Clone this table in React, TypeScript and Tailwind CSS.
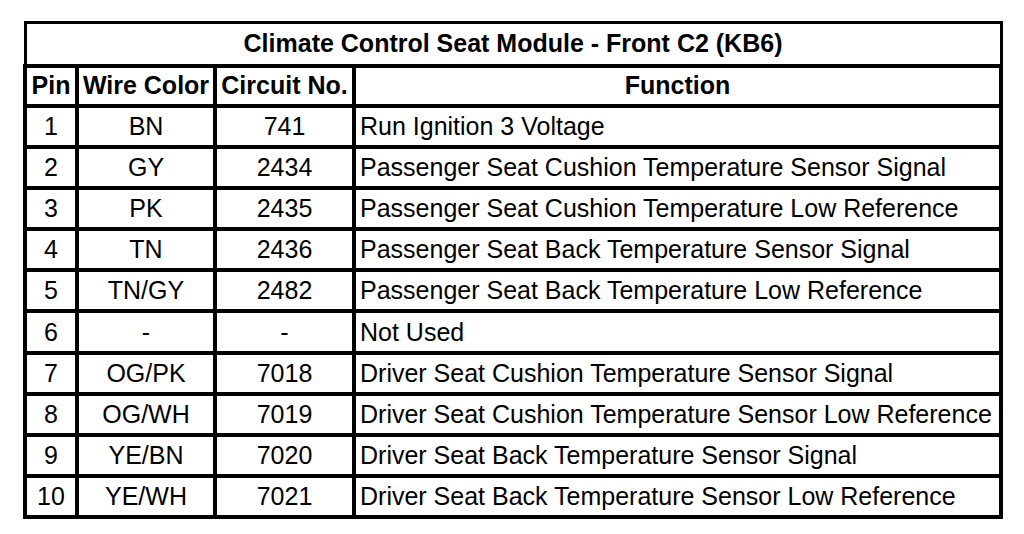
const ROWS: [string, string, string, string][] = [
  ["1", "BN", "741", "Run Ignition 3 Voltage"],
  ["2", "GY", "2434", "Passenger Seat Cushion Temperature Sensor Signal"],
  ["3", "PK", "2435", "Passenger Seat Cushion Temperature Low Reference"],
  ["4", "TN", "2436", "Passenger Seat Back Temperature Sensor Signal"],
  ["5", "TN/GY", "2482", "Passenger Seat Back Temperature Low Reference"],
  ["6", "-", "-", "Not Used"],
  ["7", "OG/PK", "7018", "Driver Seat Cushion Temperature Sensor Signal"],
  ["8", "OG/WH", "7019", "Driver Seat Cushion Temperature Sensor Low Reference"],
  ["9", "YE/BN", "7020", "Driver Seat Back Temperature Sensor Signal"],
  ["10", "YE/WH", "7021", "Driver Seat Back Temperature Sensor Low Reference"],
];

export default function App() {
  return (
    <div className="w-[1024px] h-[534px] bg-white pt-[21px] pl-[23px] font-['Liberation_Sans',Arial,sans-serif] text-black">
      <table className="w-[980px] table-fixed border-collapse border-[3px] border-black">
        <colgroup>
          <col className="w-[52px]" />
          <col className="w-[138px]" />
          <col className="w-[139px]" />
          <col />
        </colgroup>
        <thead>
          <tr className="h-[43px]">
            <th colSpan={4} className="border-[3px] border-black text-[25px] leading-none font-bold text-center">
              Climate Control Seat Module - Front C2 (KB6)
            </th>
          </tr>
          <tr className="h-[40px] text-[25px] leading-none font-bold">
            <th className="border-[4px] border-black text-center">Pin</th>
            <th className="border-[4px] border-black text-center whitespace-nowrap">Wire Color</th>
            <th className="border-[4px] border-black text-center whitespace-nowrap">Circuit No.</th>
            <th className="border-[4px] border-black text-center">Function</th>
          </tr>
        </thead>
        <tbody>
          {ROWS.map(([pin, wire, circuit, fn]) => (
            <tr key={pin} className="h-[41.2px] text-[25px] leading-none">
              <td className="border-[4px] border-black text-center">{pin}</td>
              <td className="border-[4px] border-black text-center">{wire}</td>
              <td className="border-[4px] border-black text-center">{circuit}</td>
              <td className="border-[4px] border-black pl-[4px] whitespace-nowrap">{fn}</td>
            </tr>
          ))}
        </tbody>
      </table>
    </div>
  );
}
